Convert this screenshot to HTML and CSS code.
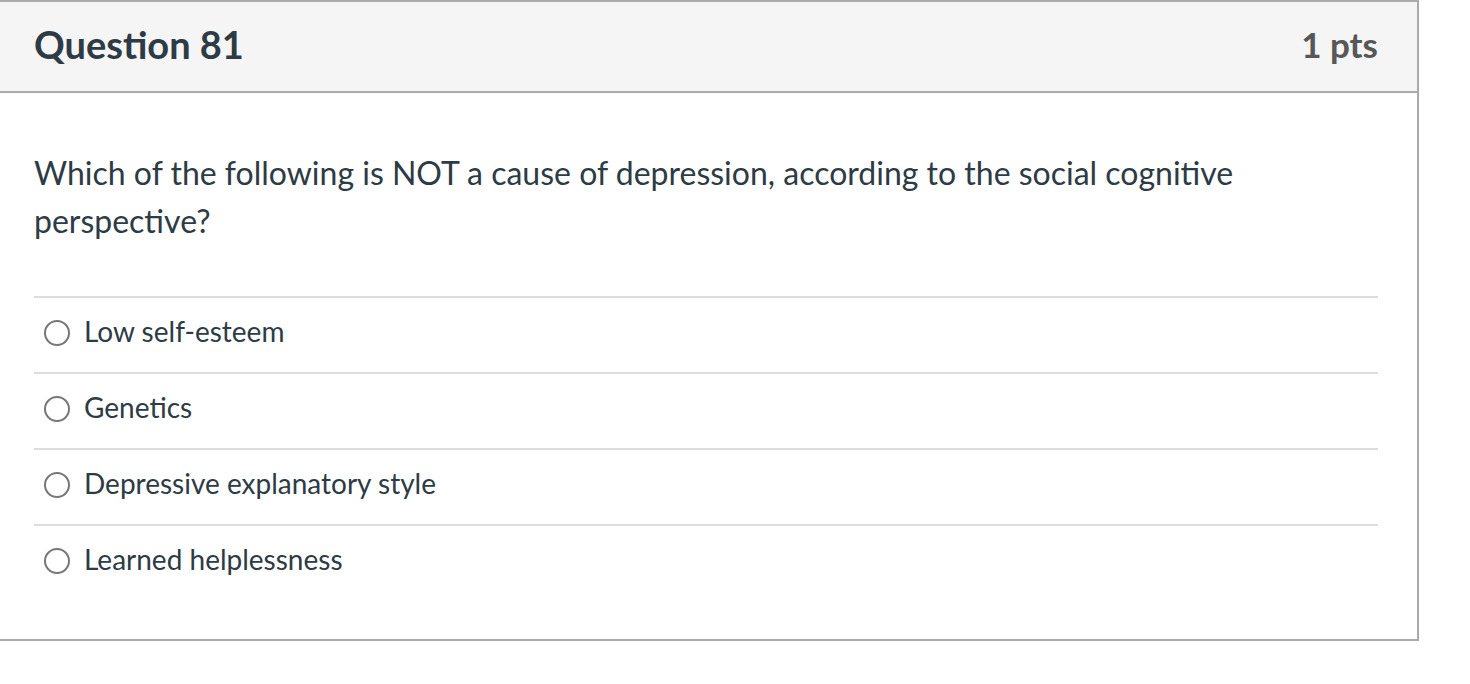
FILE: index.html
```html
<!DOCTYPE html>
<html lang="en">
<head>
<meta charset="utf-8">
<title>Question 81</title>
<link rel="stylesheet" href="styles.css">
</head>
<body>
<div class="question">
  <div class="header">
    <h2 class="title">Question 81</h2>
    <div class="points">1 pts</div>
  </div>
  <div class="content">
    <p class="prompt">Which of the following is NOT a cause of depression, according to the social cognitive perspective?</p>
    <div class="answers">
      <label class="answer"><span class="radio"></span><span class="answer-text">Low self-esteem</span></label>
      <label class="answer"><span class="radio"></span><span class="answer-text">Genetics</span></label>
      <label class="answer"><span class="radio"></span><span class="answer-text">Depressive explanatory style</span></label>
      <label class="answer"><span class="radio"></span><span class="answer-text">Learned helplessness</span></label>
    </div>
  </div>
</div>
</body>
</html>
```
FILE: styles.css
```css
html, body {
  margin: 0;
  padding: 0;
  background: #ffffff;
}
body {
  font-family: Lato, "Open Sans", "Liberation Sans", sans-serif;
  color: #2d3b45;
}
.question {
  box-sizing: border-box;
  width: 1421px;
  margin-left: -2px;
  border: 2px solid #aaaaaa;
}
.header {
  display: flex;
  align-items: center;
  justify-content: space-between;
  box-sizing: border-box;
  height: 91px;
  padding: 0 39px 6px 34px;
  background: #f5f5f5;
  border-bottom: 2px solid #aaaaaa;
}
.title {
  margin: 0;
  font-size: 38px;
  font-weight: 700;
  color: #2d3b45;
}
.points {
  font-size: 35px;
  font-weight: 700;
  color: #575757;
}
.content {
  padding: 56px 39px 39px 34px;
}
.prompt {
  margin: 0 0 51px;
  font-size: 32px;
  line-height: 48px;
  max-width: 1260px;
}
.answers {
  display: flex;
  flex-direction: column;
}
.answer {
  display: flex;
  align-items: center;
  gap: 14px;
  box-sizing: border-box;
  height: 76px;
  padding: 0 0 8px 10px;
  border-top: 2px solid #dddddd;
  font-size: 28px;
}
.radio {
  width: 22px;
  height: 22px;
  border: 2px solid #777777;
  border-radius: 50%;
  flex: none;
  margin-top: 3px;
}
```
